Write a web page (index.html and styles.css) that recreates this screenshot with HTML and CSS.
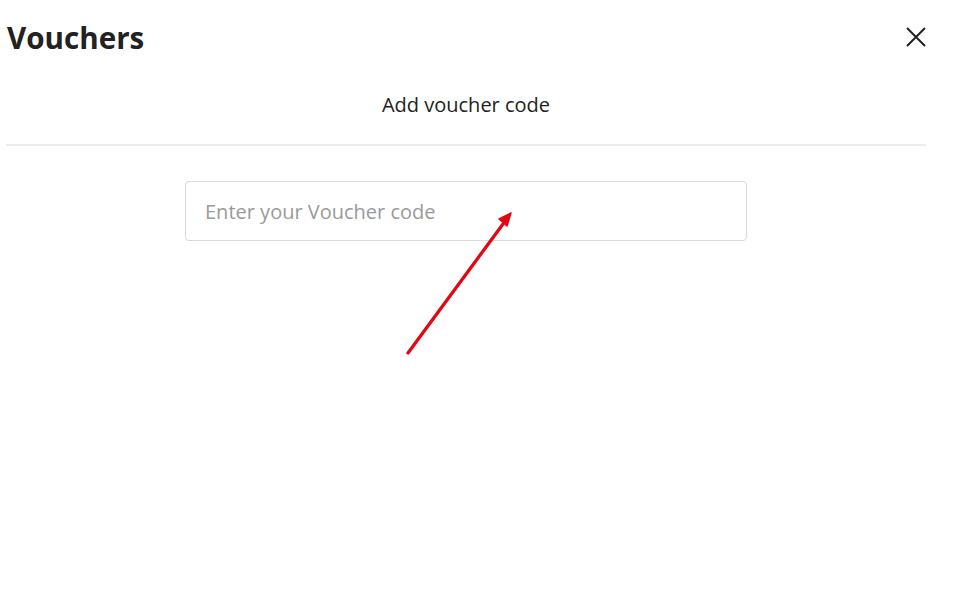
FILE: index.html
```html
<!DOCTYPE html>
<html lang="en">
<head>
<meta charset="utf-8">
<title>Vouchers</title>
<link rel="stylesheet" href="styles.css">
</head>
<body>
<div class="modal">
  <header class="modal-header">
    <h1 class="title">Vouchers</h1>
    <button class="close" aria-label="Close">
      <svg width="20" height="20" viewBox="0 0 20 20"><path d="M1 1L19 19M19 1L1 19" stroke="#222" stroke-width="2" fill="none"/></svg>
    </button>
  </header>
  <div class="tabs">
    <div class="tab">Add voucher code</div>
  </div>
  <div class="form">
    <input class="code-input" type="text" placeholder="Enter your Voucher code">
  </div>
  <svg class="annotation" width="963" height="591" viewBox="0 0 963 591">
    <line x1="408" y1="353" x2="503" y2="224" stroke="#e30613" stroke-width="3.3" stroke-linecap="round"/>
    <polygon points="511,213 499,219 507,226" fill="#e30613" stroke="#e30613" stroke-width="1.5" stroke-linejoin="round"/>
  </svg>
</div>
</body>
</html>
```
FILE: styles.css
```css
html, body {
  margin: 0;
  padding: 0;
  background: #fff;
}
body {
  font-family: "Open Sans", "Liberation Sans", sans-serif;
  color: #222;
  width: 963px;
  height: 591px;
  overflow: hidden;
}
.modal {
  padding: 0 37px 0 6px;
}
.modal-header {
  display: flex;
  justify-content: space-between;
  align-items: flex-start;
  height: 76px;
}
.title {
  margin: 18px 0 0 1px;
  font-size: 29.6px;
  font-weight: 700;
  line-height: 40px;
  color: #222;
  letter-spacing: 0;
}
.close {
  margin-top: 27px;
  padding: 0;
  border: 0;
  background: none;
  width: 20px;
  height: 20px;
  display: block;
}
.close svg { display: block; }
.tabs {
  border-bottom: 2px solid #ececec;
  display: flex;
  justify-content: center;
}
.tab {
  font-size: 20px;
  line-height: 26px;
  padding: 16px 0 26px;
  color: #222;
}
.form {
  display: flex;
  justify-content: center;
  padding-top: 35px;
}
.code-input {
  box-sizing: border-box;
  width: 562px;
  height: 60px;
  border: 1px solid #d9d9d9;
  border-radius: 4px;
  padding: 0 19px;
  font-family: "Open Sans", "Liberation Sans", sans-serif;
  font-size: 20px;
  color: #222;
  outline: none;
}
.code-input::placeholder {
  color: #9a9a9a;
}
.annotation {
  position: absolute;
  left: 0;
  top: 0;
  pointer-events: none;
}
```
